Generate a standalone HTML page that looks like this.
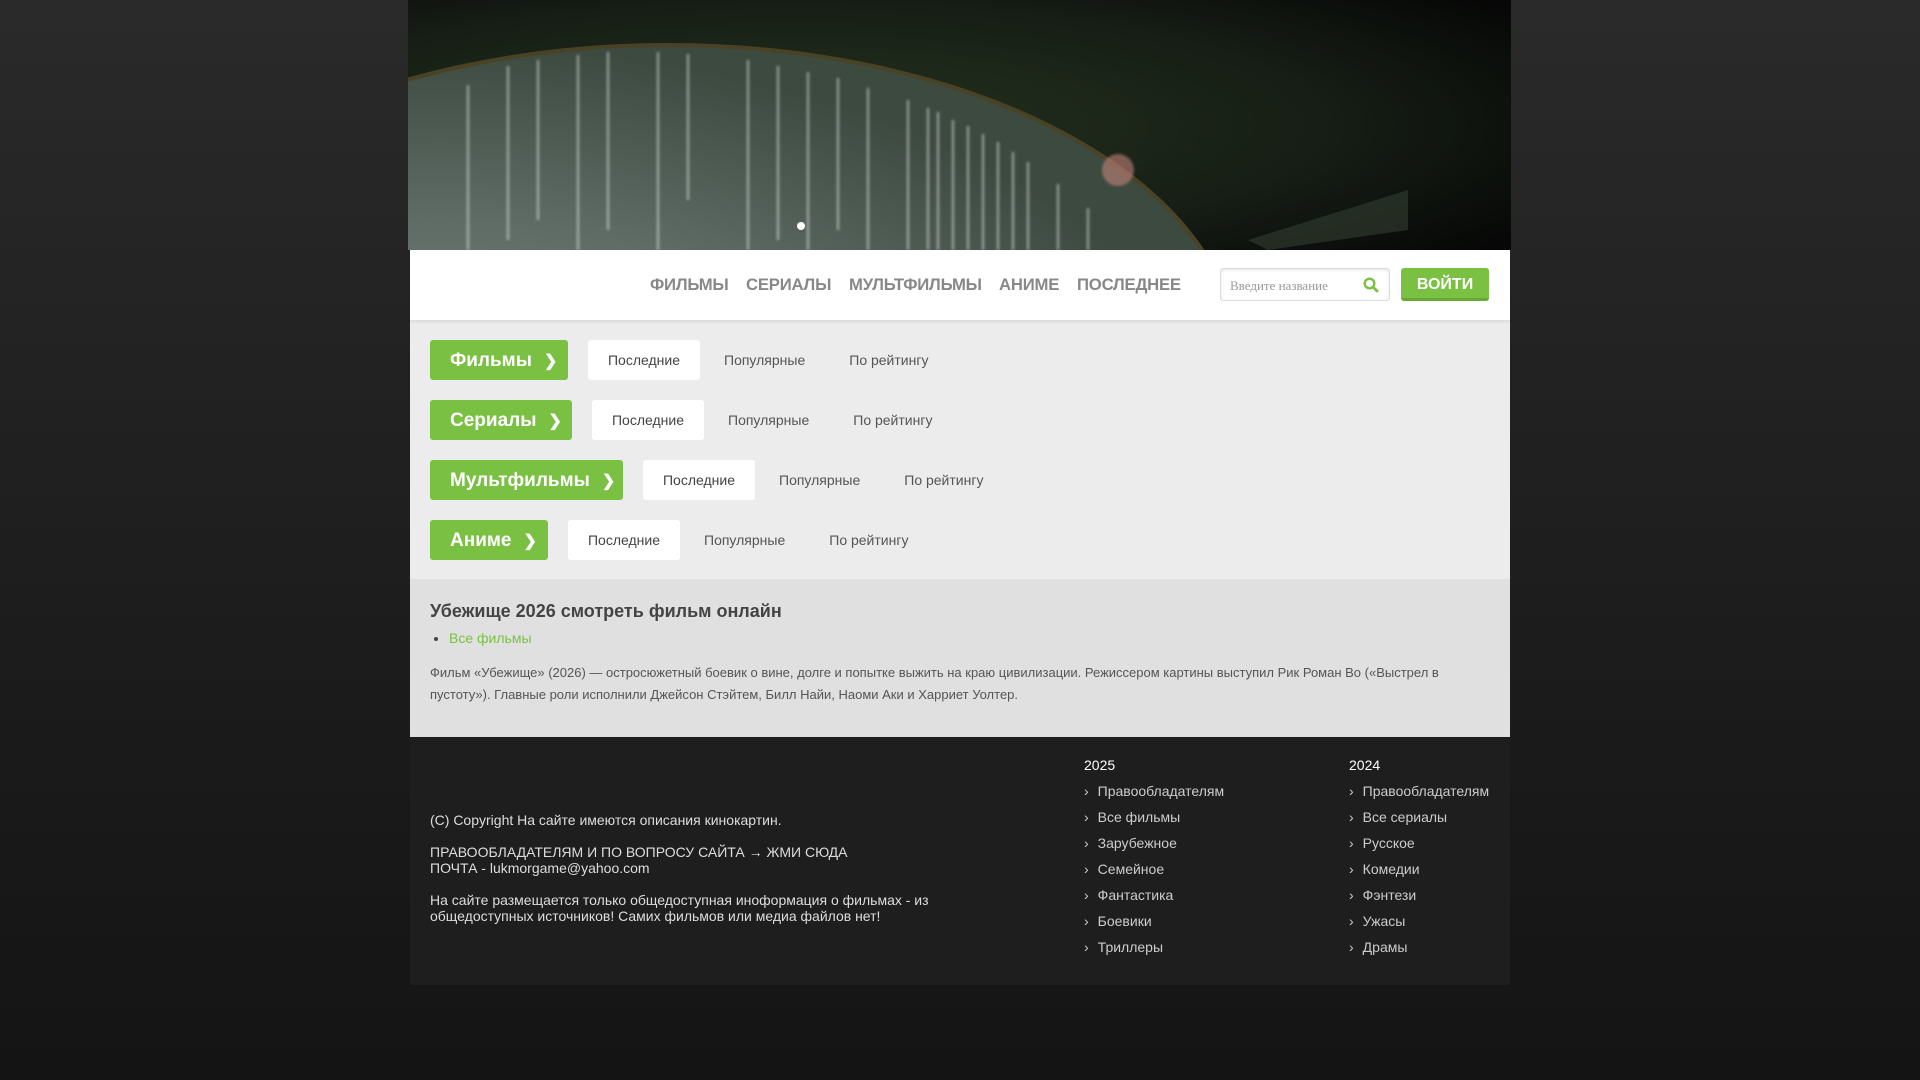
<!DOCTYPE html>
<html><head><meta charset="utf-8"><style>
*{margin:0;padding:0;box-sizing:border-box}
body{width:1920px;height:1080px;background:linear-gradient(#2a2a2a,#1c1c1c 60%,#141414);font-family:"Liberation Sans",Arial,sans-serif;position:relative;overflow:hidden}
.hdr{position:absolute;left:408px;top:0;width:1103px;height:250px;overflow:hidden;background:#0b0d0b}
.wrap{position:absolute;left:410px;top:250px;width:1100px}
.nav{height:70px;background:#fff;position:relative;box-shadow:0 2px 3px rgba(0,0,0,.08)}
.nav a{position:absolute;top:25px;font-size:16.7px;font-weight:bold;color:#888;text-decoration:none;letter-spacing:-.2px}
.srch{position:absolute;left:810px;top:18px;width:170px;height:33px;border:1px solid #ddd;border-radius:3px;box-shadow:inset 0 1px 3px rgba(0,0,0,.12);font-family:"Liberation Serif",serif;font-size:13px;color:#999;padding:9px 9px}
.btn{position:absolute;left:991px;top:18px;width:88px;height:33px;background:#7ac143;border-radius:3px;border-bottom:3px solid #68a836;color:#fff;font-weight:bold;font-size:16px;text-align:center;line-height:33px}
.cats{background:#ececec;height:259px;padding-top:20px}
.row{height:40px;margin-bottom:20px;margin-left:20px;display:flex;align-items:center}
.g{height:40px;background:#7ac143;border-radius:3px;color:#fff;font-weight:bold;font-size:19px;line-height:42px;padding-left:20px;margin-right:20px}
.g span{display:inline-block;margin-left:12px;font-size:16px}
.w{height:40px;width:112px;background:#fff;border-radius:3px;font-size:14px;color:#444;line-height:40px;text-align:center}
.t{font-size:14px;color:#555;margin-left:24px;margin-right:20px}
.desc{background:#e0e0e0;height:158px;padding:21px 20px 0}
.desc h1{font-size:18px;color:#444;line-height:22px}
.desc ul{margin:8px 0 0 0;padding-left:19px;font-size:14px;color:#444}
.desc li a{color:#7ac143;font-size:14px}
.desc p{font-size:13px;color:#555;line-height:22px;margin-top:16px;padding-right:30px}
.ft{background:#1e1e1e;height:248px;position:relative;color:#ddd;font-size:14px}
.ft .l{position:absolute;left:20px;width:520px;line-height:16px}
.col{position:absolute;top:15px;font-size:14px;line-height:26px}
.col b{font-weight:normal;color:#fff;display:block}
.col div{color:#ccc}
.col div:before{content:"›";margin-right:9px;color:#ccc}
</style></head><body>
<div class="hdr">
<svg width="1103" height="250" viewBox="0 0 1103 250">
<defs>
<radialGradient id="o" cx="0.35" cy="0.5" r="0.8"><stop offset="0" stop-color="#26321f"/><stop offset="0.6" stop-color="#161e15"/><stop offset="1" stop-color="#060706"/></radialGradient>
<radialGradient id="i" cx="0.3" cy="0.7" r="0.7"><stop offset="0" stop-color="#84918c"/><stop offset="0.6" stop-color="#5f6c66"/><stop offset="1" stop-color="#3d4a40"/></radialGradient>
<filter id="b"><feGaussianBlur stdDeviation="1.2"/></filter>
</defs>
<rect width="1103" height="250" fill="url(#o)"/>
<ellipse cx="260" cy="360" rx="570" ry="315" fill="url(#i)" stroke="#4a4224" stroke-width="4"/>
<g stroke="#eef3f0" stroke-opacity=".45" stroke-width="2.5" fill="none" filter="url(#b)">
<path d="M60 85 V250M100 66 V240M130 60 V220M170 55 V250M200 52 V230M250 52 V250M280 54 V200M340 60 V250M370 66 V240M400 72 V250M430 78 V230M460 88 V250M500 100 V250M530 112 V250M560 126 V250M590 142 V250M620 162 V250M650 184 V250M680 208 V250M520 108 V250M545 120 V250M575 134 V250M605 152 V250"/>
</g>
<circle cx="710" cy="170" r="16" fill="#d08a80" opacity=".55" filter="url(#b)"/>
<circle cx="393" cy="226" r="4" fill="#fff"/>
<path d="M840 240 L1000 190 L1000 230 L860 250Z" fill="#3a4538" opacity=".5"/>
</svg>
</div>
<div class="wrap">
<div class="nav">
<a style="left:240px">ФИЛЬМЫ</a><a style="left:336px">СЕРИАЛЫ</a><a style="left:439px">МУЛЬТФИЛЬМЫ</a><a style="left:589px">АНИМЕ</a><a style="left:667px">ПОСЛЕДНЕЕ</a>
<div class="srch">Введите название<svg style="position:absolute;right:10px;top:8px" width="16" height="16" viewBox="0 0 16 16"><circle cx="6.5" cy="6.5" r="4.8" stroke="#7ac143" stroke-width="2.4" fill="none"/><path d="M10 10 L14 14" stroke="#7ac143" stroke-width="2.8" stroke-linecap="round"/></svg></div>
<div class="btn">ВОЙТИ</div>
</div>
<div class="cats">
<div class="row"><div class="g" style="width:138px">Фильмы<span>❯</span></div><div class="w">Последние</div><div class="t">Популярные</div><div class="t">По рейтингу</div></div>
<div class="row"><div class="g" style="width:142px">Сериалы<span>❯</span></div><div class="w">Последние</div><div class="t">Популярные</div><div class="t">По рейтингу</div></div>
<div class="row"><div class="g" style="width:193px">Мультфильмы<span>❯</span></div><div class="w">Последние</div><div class="t">Популярные</div><div class="t">По рейтингу</div></div>
<div class="row"><div class="g" style="width:118px">Аниме<span>❯</span></div><div class="w">Последние</div><div class="t">Популярные</div><div class="t">По рейтингу</div></div>
</div>
<div class="desc">
<h1>Убежище 2026 смотреть фильм онлайн</h1>
<ul><li><a>Все фильмы</a></li></ul>
<p>Фильм «Убежище» (2026) — остросюжетный боевик о вине, долге и попытке выжить на краю цивилизации. Режиссером картины выступил Рик Роман Во («Выстрел в пустоту»). Главные роли исполнили Джейсон Стэйтем, Билл Найи, Наоми Аки и Харриет Уолтер.</p>
</div>
<div class="ft">
<div class="l" style="top:75px">(C) Copyright На сайте имеются описания кинокартин.</div>
<div class="l" style="top:107px">ПРАВООБЛАДАТЕЛЯМ И ПО ВОПРОСУ САЙТА → ЖМИ СЮДА<br>ПОЧТА - lukmorgame@yahoo.com</div>
<div class="l" style="top:155px">На сайте размещается только общедоступная иноформация о фильмах - из общедоступных источников! Самих фильмов или медиа файлов нет!</div>
<div class="col" style="left:674px"><b>2025</b><div>Правообладателям</div><div>Все фильмы</div><div>Зарубежное</div><div>Семейное</div><div>Фантастика</div><div>Боевики</div><div>Триллеры</div></div>
<div class="col" style="left:939px"><b>2024</b><div>Правообладателям</div><div>Все сериалы</div><div>Русское</div><div>Комедии</div><div>Фэнтези</div><div>Ужасы</div><div>Драмы</div></div>
</div>
</div>
</body></html>
